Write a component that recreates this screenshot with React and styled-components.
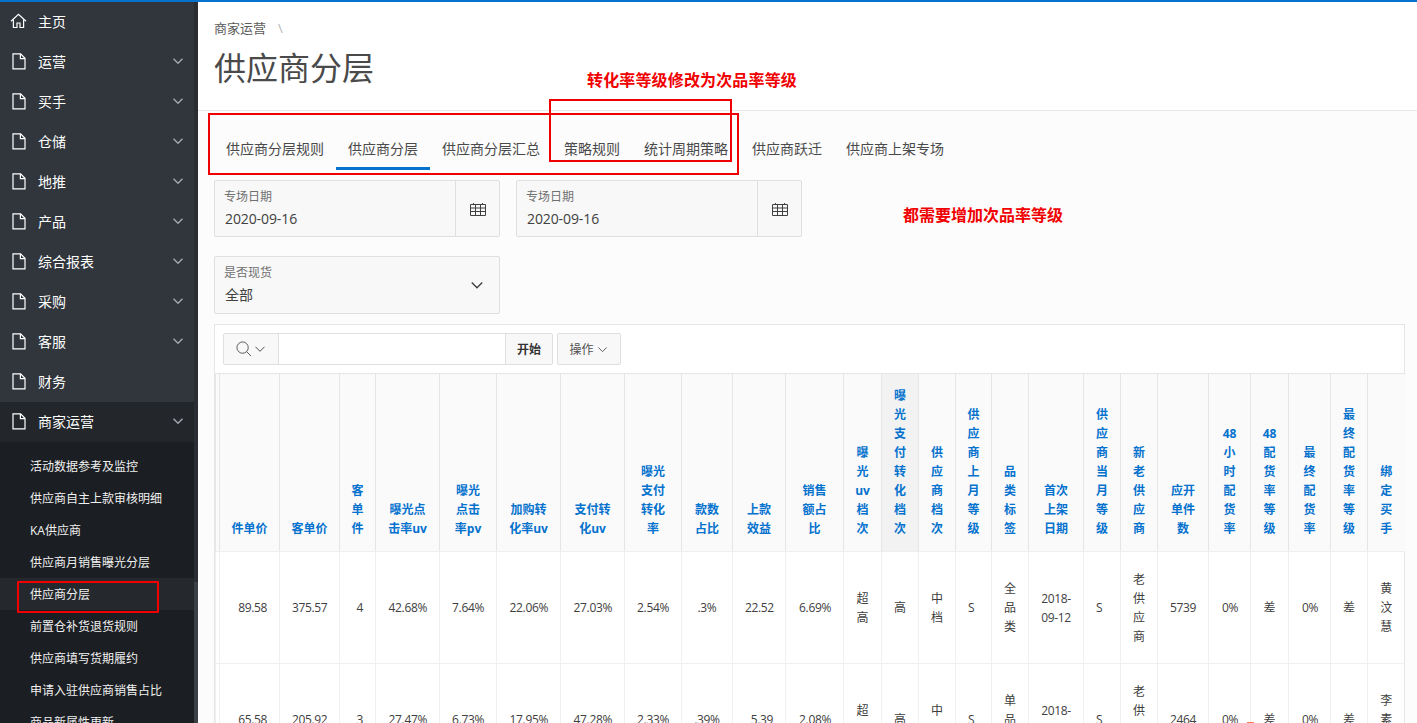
import React from "react";
import styled, { createGlobalStyle } from "styled-components";

const Global = createGlobalStyle`
  html, body { margin: 0; height: 100%; overflow: hidden; background: #fff; }
  * { box-sizing: border-box; }
  body { font-family: "Open Sans", "Noto Sans CJK SC", sans-serif; font-size: 12px; color: #404040; }
`;

const Page = styled.div`
  position: relative;
  width: 1417px;
  height: 723px;
  overflow: hidden;
  border-top: 2px solid #0572ce;
  display: flex;
`;
const Sidebar = styled.aside`
  width: 198px;
  flex: none;
  display: flex;
  background: #31363c;
`;
const Nav = styled.nav`
  width: 194px;
  flex: none;
  display: flex;
  flex-direction: column;
  overflow: hidden;
`;
const ScrollTrack = styled.div`
  width: 4px;
  flex: none;
  background: #2a2e33;
  display: flex;
  flex-direction: column;
  justify-content: flex-end;
`;
const ScrollThumb = styled.div`
  height: 141px;
  background: #3b4047;
`;
const NavItem = styled.div`
  height: 40px;
  flex: none;
  display: flex;
  align-items: center;
  padding: 0 10px 2px;
  color: #fff;
  font-size: 14px;
  background: ${(p) => (p.$open ? "#23272c" : "transparent")};
`;
const NavIcon = styled.span`
  width: 28px;
  flex: none;
  display: flex;
  align-items: center;
  color: #fff;
`;
const NavLabel = styled.span`
  flex: 1;
`;
const NavChevron = styled.span`
  display: flex;
  color: #a2a6ab;
`;
const SubList = styled.div`
  background: #1b1e22;
  padding-top: 8px;
  flex: none;
`;
const SubItem = styled.div`
  height: 32px;
  display: flex;
  align-items: center;
  padding-left: 30px;
  font-size: 12px;
  color: #f0f0f0;
  background: ${(p) => (p.$active ? "#25282c" : "transparent")};
`;
const Main = styled.main`
  flex: 1;
  min-width: 0;
  background: #fcfcfc;
  display: flex;
  flex-direction: column;
`;
const Header = styled.header`
  height: 109px;
  flex: none;
  background: #fff;
  border-bottom: 1px solid #e8e8e8;
  padding: 17px 16px 0;
`;
const Crumb = styled.div`
  display: flex;
  gap: 12px;
  font-size: 13px;
  line-height: 18px;
  color: #5c5c5c;
`;
const CrumbSep = styled.span`
  color: #b5b5b5;
`;
const Title = styled.h1`
  margin: 9px 0 0;
  font-size: 32px;
  line-height: 44px;
  font-weight: 400;
  color: #4a4a4a;
`;
const Tabs = styled.div`
  display: flex;
  height: 40px;
  margin: 19px 0 10px 16px;
  flex: none;
  align-items: stretch;
`;
const Tab = styled.div`
  padding: 0 12px;
  font-size: 14px;
  line-height: 38px;
  color: #4a4a4a;
  border-bottom: 3px solid ${(p) => (p.$active ? "#0572ce" : "transparent")};
`;
const FormRow = styled.div`
  display: flex;
  gap: 16px;
  padding-left: 16px;
  margin-bottom: ${(p) => (p.$last ? 10 : 19)}px;
  flex: none;
`;
const Field = styled.div`
  width: 286px;
  height: ${(p) => (p.$tall ? 58 : 57)}px;
  display: flex;
  background: #f8f8f8;
  border: 1px solid #dfdfdf;
  border-radius: 2px;
`;
const FieldBody = styled.div`
  flex: 1;
  padding: 7px 10px 0 9px;
`;
const FieldLabel = styled.div`
  font-size: 12px;
  line-height: 18px;
  color: #707070;
`;
const FieldValue = styled.div`
  font-size: 14px;
  line-height: 22px;
  margin: 2px 0 0 1px;
  letter-spacing: -0.1px;
  color: #404040;
`;
const FieldAddon = styled.div`
  width: 44px;
  flex: none;
  display: flex;
  align-items: center;
  justify-content: center;
  color: #404040;
  border-left: ${(p) => (p.$plain ? "none" : "1px solid #dfdfdf")};
`;
const Report = styled.section`
  margin: 0 12px 0 16px;
  background: #fff;
  border: 1px solid #e6e6e6;
  border-bottom: none;
  flex: 1;
  min-height: 0;
`;
const Toolbar = styled.div`
  height: 49px;
  padding: 8px 8px 0;
  display: flex;
  gap: 4px;
  border-bottom: 1px solid #e6e6e6;
`;
const SearchGroup = styled.div`
  display: flex;
  width: 330px;
  height: 32px;
  border: 1px solid #dfdfdf;
  border-radius: 2px;
`;
const SearchMenu = styled.div`
  width: 55px;
  flex: none;
  display: flex;
  align-items: center;
  justify-content: center;
  gap: 2px;
  background: #f8f8f8;
  border-right: 1px solid #dfdfdf;
  color: #505050;
`;
const SearchInput = styled.div`
  flex: 1;
  background: #fff;
`;
const GoButton = styled.div`
  width: 47px;
  flex: none;
  display: flex;
  align-items: center;
  justify-content: center;
  background: #f8f8f8;
  border-left: 1px solid #dfdfdf;
  font-weight: 700;
  color: #333;
`;
const ActionsButton = styled.div`
  width: 64px;
  height: 32px;
  display: flex;
  align-items: center;
  justify-content: center;
  gap: 3px;
  padding-right: 1px;
  background: #f8f8f8;
  border: 1px solid #dfdfdf;
  border-radius: 2px;
  color: #505050;
`;
const Table = styled.table`
  border-collapse: collapse;
  table-layout: fixed;
  width: 1189px;
  font-size: 12px;
`;
const Head = styled.th`
  height: 177px;
  padding: 12px 11px 13px;
  vertical-align: bottom;
  text-align: center;
  font-weight: 700;
  line-height: 19px;
  color: #0572ce;
  background: ${(p) => (p.$sorted ? "#f2f2f2" : "#fafafa")};
  border-left: 1px solid #e6e6e6;
  border-bottom: 1px solid #efefef;
`;
const Cell = styled.td`
  height: 112px;
  padding: 0 12px;
  vertical-align: middle;
  line-height: 19px;
  color: #404040;
  text-align: ${(p) => p.$align || "center"};
  letter-spacing: ${(p) => (p.$num ? "-0.35px" : "0")};
  border-left: 1px solid #f0f0f0;
  border-bottom: 1px solid #f0f0f0;
  white-space: ${(p) => (p.$nowrap ? "nowrap" : "normal")};
`;
const Annotation = styled.div`
  position: absolute;
  left: ${(p) => p.$x}px;
  top: ${(p) => p.$y}px;
  color: #f00000;
  font-size: 16px;
  line-height: 22px;
  font-weight: 700;
  letter-spacing: ${(p) => p.$spacing || 0}px;
  white-space: nowrap;
`;
const RedBox = styled.div`
  position: absolute;
  left: ${(p) => p.$x}px;
  top: ${(p) => p.$y}px;
  width: ${(p) => p.$w}px;
  height: ${(p) => p.$h}px;
  border: 2px solid #f00000;
`;
const Tick = styled.div`
  position: absolute;
  left: 1247px;
  top: 720px;
  width: 7px;
  height: 1px;
  background: #ff7a50;
`;

const House = () => (
  <svg width="17" height="16" viewBox="0 0 17 16" fill="none" stroke="currentColor" strokeWidth="1.2">
    <path d="M1 8.2 8.5 1.2 16 8.2" />
    <path d="M3.4 6.4V14.5H7V10H10V14.5H13.6V6.4" />
  </svg>
);
const FileIcon = () => (
  <svg width="14" height="17" viewBox="0 0 14 17" fill="none" stroke="currentColor" strokeWidth="1.2" style={{ marginLeft: 2 }}>
    <path d="M1 .9H8.6L13 5.3V15.9H1Z" />
    <path d="M8.4 1V5.6H13" />
  </svg>
);
const Chevron = ({ size = 12, w = 1.5 }) => (
  <svg width={size} height={size} viewBox="0 0 12 12" fill="none" stroke="currentColor" strokeWidth={w}>
    <path d="M1.5 3.8 6 8.3 10.5 3.8" />
  </svg>
);
const Calendar = () => (
  <svg width="16" height="14" viewBox="0 0 16 14" fill="none" stroke="currentColor" strokeWidth="1">
    <path d="M.5 2.5H15.5V13.5H.5ZM.5 6H15.5M.5 9.5H15.5M5.5 2.5V13.5M10.5 2.5V13.5M3.5 1V2.5M12.5 1V2.5" />
  </svg>
);
const Search = () => (
  <svg width="16" height="16" viewBox="0 0 17 17" fill="none" stroke="currentColor" strokeWidth="1">
    <circle cx="7" cy="7" r="6" />
    <path d="M11.4 11.4 16 16" />
  </svg>
);

const menu = [
  ["主页", "home"], ["运营"], ["买手"], ["仓储"], ["地推"], ["产品"], ["综合报表"], ["采购"], ["客服"], ["财务", "leaf"],
];
const subs = ["活动数据参考及监控", "供应商自主上款审核明细", "KA供应商", "供应商月销售曝光分层", "供应商分层", "前置仓补货退货规则", "供应商填写货期履约", "申请入驻供应商销售占比", "商品新属性更新"];
const tabs = ["供应商分层规则", "供应商分层", "供应商分层汇总", "策略规则", "统计周期策略", "供应商跃迁", "供应商上架专场"];

const widths = [4, 60, 60, 36, 64, 57, 64, 64, 57, 51, 53, 58, 38, 37, 37, 36, 37, 55, 37, 37, 51, 42, 38, 42, 37, 37];
const heads = ["", "件单价", "客单价", "客单件", "曝光点击率uv", "曝光点击率pv", "加购转化率uv", "支付转化uv", "曝光支付转化率", "款数占比", "上款效益", "销售额占比", "曝光uv档次", "曝光支付转化档次", "供应商档次", "供应商上月等级", "品类标签", "首次上架日期", "供应商当月等级", "新老供应商", "应开单件数", "48小时配货率", "48配货率等级", "最终配货率", "最终配货率等级", "绑定买手"];

const numeric = (v, align = "right") => ({ v, align, num: true });
const makeRow = (a) => [
  { v: "" },
  numeric(a[0]), numeric(a[1]), numeric(a[2]), numeric(a[3]), numeric(a[4]), numeric(a[5]), numeric(a[6]), numeric(a[7]),
  numeric(a[8], "center"), numeric(a[9]), numeric(a[10]),
  { v: a[11] }, { v: a[12] }, { v: a[13] }, { v: "S", align: "left" }, { v: a[14] },
  { v: <>2018-<br />{a[15]}</>, num: true, nowrap: true },
  { v: "S", align: "left" }, { v: "老供应商" }, numeric(a[16]), numeric("0%"), { v: "差" }, numeric("0%"), { v: "差" }, { v: a[17] },
];
const rows = [
  makeRow(["89.58", "375.57", "4", "42.68%", "7.64%", "22.06%", "27.03%", "2.54%", ".3%", "22.52", "6.69%", "超高", "高", "中档", "全品类", "09-12", "5739", "黄汶慧"]),
  makeRow(["65.58", "205.92", "3", "27.47%", "6.73%", "17.95%", "47.28%", "2.33%", ".39%", "5.39", "2.08%", "超高", "高", "中档", "单品类", "09-12", "2464", "李素素"]),
];

export default function App() {
  return (
    <>
      <Global />
      <Page>
        <Sidebar>
          <Nav>
            {menu.map(([label, kind]) => (
              <NavItem key={label}>
                <NavIcon>{kind === "home" ? <House /> : <FileIcon />}</NavIcon>
                <NavLabel>{label}</NavLabel>
                {!kind && <NavChevron><Chevron /></NavChevron>}
              </NavItem>
            ))}
            <NavItem $open>
              <NavIcon><FileIcon /></NavIcon>
              <NavLabel>商家运营</NavLabel>
              <NavChevron><Chevron /></NavChevron>
            </NavItem>
            <SubList>
              {subs.map((s) => (
                <SubItem key={s} $active={s === "供应商分层"}>{s}</SubItem>
              ))}
            </SubList>
          </Nav>
          <ScrollTrack><ScrollThumb /></ScrollTrack>
        </Sidebar>
        <Main>
          <Header>
            <Crumb>商家运营<CrumbSep>\</CrumbSep></Crumb>
            <Title>供应商分层</Title>
          </Header>
          <Tabs>
            {tabs.map((t) => (
              <Tab key={t} $active={t === "供应商分层"}>{t}</Tab>
            ))}
          </Tabs>
          <FormRow>
            {[0, 1].map((i) => (
              <Field key={i}>
                <FieldBody>
                  <FieldLabel>专场日期</FieldLabel>
                  <FieldValue>2020-09-16</FieldValue>
                </FieldBody>
                <FieldAddon><Calendar /></FieldAddon>
              </Field>
            ))}
          </FormRow>
          <FormRow $last>
            <Field $tall>
              <FieldBody>
                <FieldLabel>是否现货</FieldLabel>
                <FieldValue>全部</FieldValue>
              </FieldBody>
              <FieldAddon $plain><Chevron size={14} w={1.2} /></FieldAddon>
            </Field>
          </FormRow>
          <Report>
            <Toolbar>
              <SearchGroup>
                <SearchMenu><Search /><Chevron size={12} w={1} /></SearchMenu>
                <SearchInput />
                <GoButton>开始</GoButton>
              </SearchGroup>
              <ActionsButton>操作<Chevron size={11} w={1} /></ActionsButton>
            </Toolbar>
            <Table>
              <colgroup>
                {widths.map((w, i) => <col key={i} style={{ width: w }} />)}
              </colgroup>
              <thead>
                <tr>
                  {heads.map((h, i) => (
                    <Head key={i} $sorted={h === "曝光支付转化档次"}>{h}</Head>
                  ))}
                </tr>
              </thead>
              <tbody>
                {rows.map((r, i) => (
                  <tr key={i}>
                    {r.map((c, j) => (
                      <Cell key={j} $align={c.align} $num={c.num} $nowrap={c.nowrap}>{c.v}</Cell>
                    ))}
                  </tr>
                ))}
              </tbody>
            </Table>
          </Report>
        </Main>
        <Annotation $x={587} $y={67} $spacing={0.15}>转化率等级修改为次品率等级</Annotation>
        <Annotation $x={903} $y={202}>都需要增加次品率等级</Annotation>
        <RedBox $x={549} $y={97} $w={183} $h={63} />
        <RedBox $x={208} $y={111} $w={531} $h={62} />
        <RedBox $x={17} $y={579} $w={142} $h={32} />
        <Tick />
      </Page>
    </>
  );
}
